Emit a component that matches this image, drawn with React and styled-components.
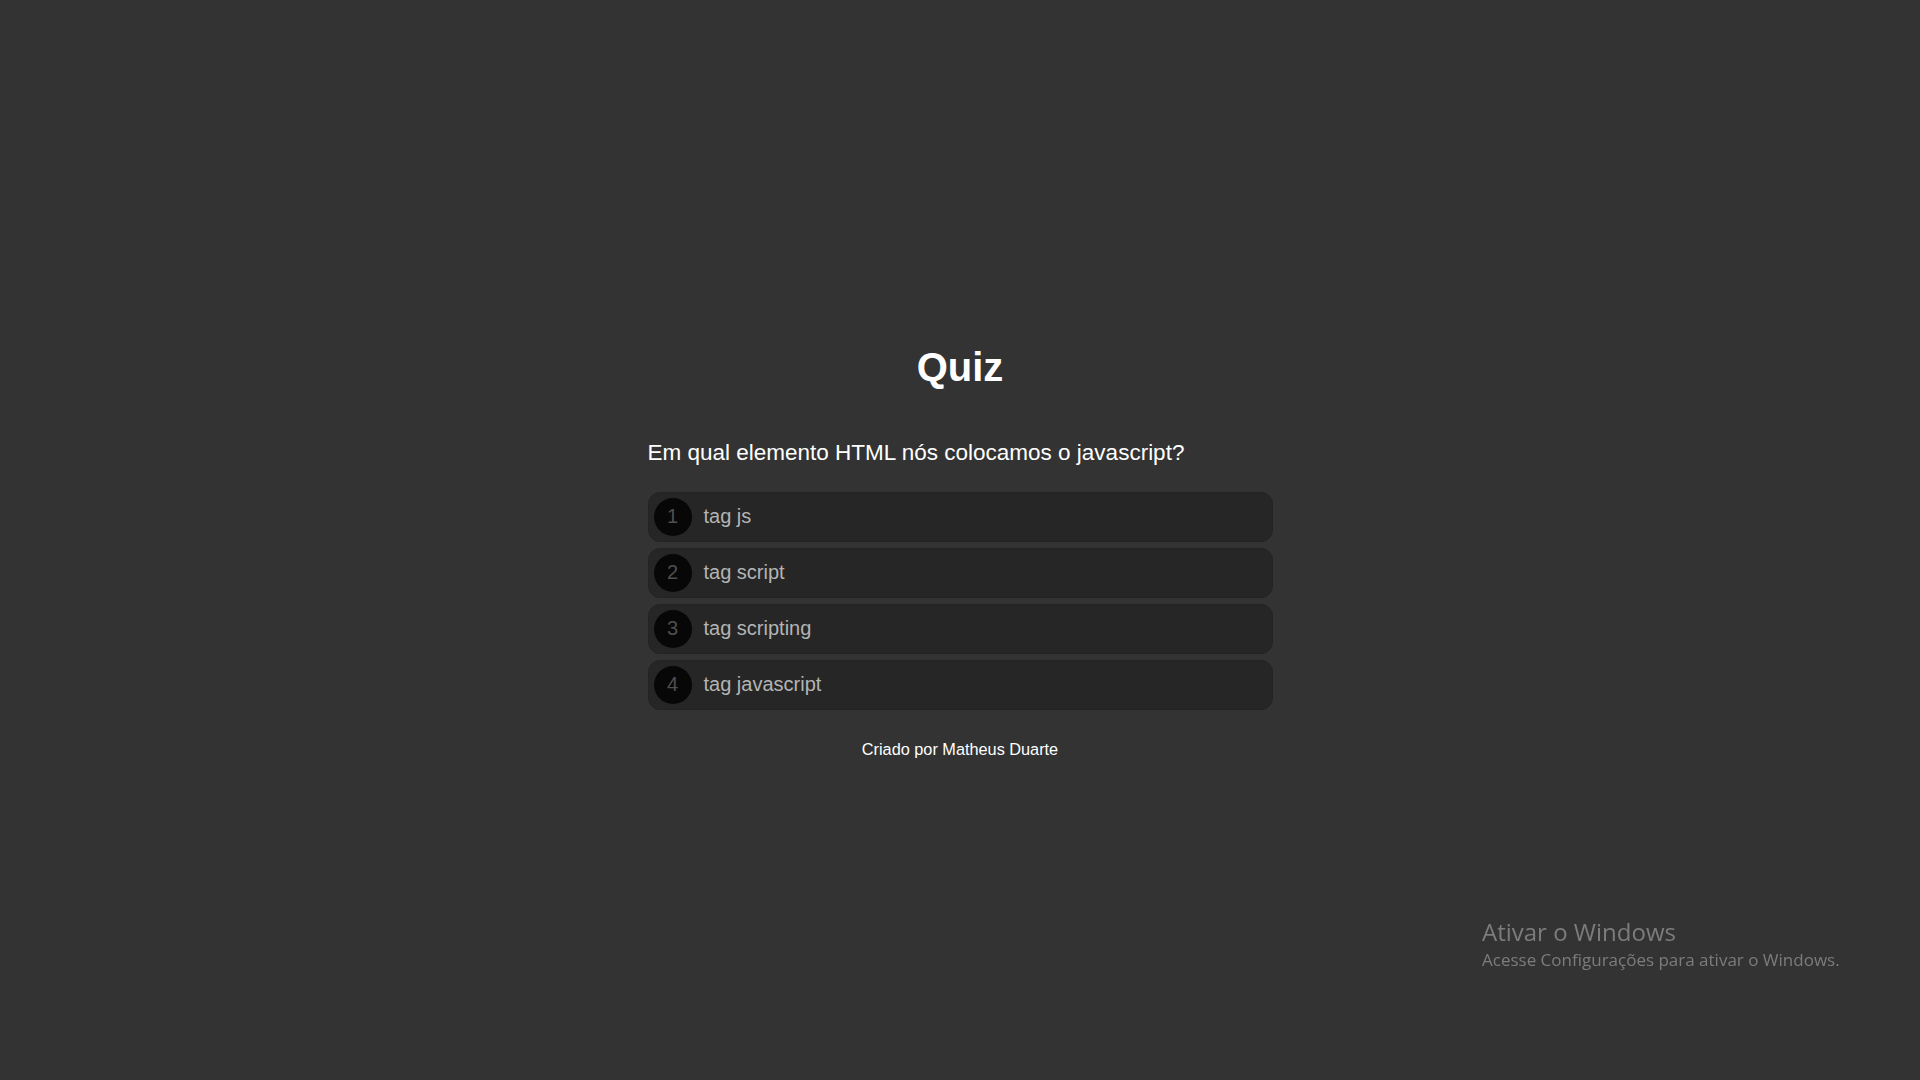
import styled, { createGlobalStyle } from 'styled-components'

const GlobalStyle = createGlobalStyle`
  html, body {
    margin: 0;
    padding: 0;
    background: #333333;
    font-family: "Liberation Sans", Arial, sans-serif;
  }
`

const options = ['tag js', 'tag script', 'tag scripting', 'tag javascript']

export default function App() {
  return (
    <>
      <GlobalStyle />
      <Page>
        <Quiz>
          <Title>Quiz</Title>
          <Question>Em qual elemento HTML nós colocamos o javascript?</Question>
          <OptionList>
            {options.map((text, i) => (
              <Option key={text}>
                <Number>{i + 1}</Number>
                <OptionText>{text}</OptionText>
              </Option>
            ))}
          </OptionList>
          <Footer>Criado por Matheus Duarte</Footer>
        </Quiz>
      </Page>
      <Watermark>
        <WatermarkTitle>Ativar o Windows</WatermarkTitle>
        <WatermarkText>Acesse Configurações para ativar o Windows.</WatermarkText>
      </Watermark>
    </>
  )
}

const Page = styled.div`
  min-height: 100vh;
  display: flex;
  align-items: center;
  justify-content: center;
`

const Quiz = styled.div`
  width: 625px;
  display: flex;
  flex-direction: column;
  margin-top: 23px;
`

const Title = styled.h1`
  margin: 0 0 50px;
  text-align: center;
  color: #ffffff;
  font-size: 40px;
  font-weight: 700;
`

const Question = styled.h2`
  margin: 0 0 26px;
  color: #ffffff;
  font-size: 22.5px;
  font-weight: 400;
`

const OptionList = styled.div`
  display: flex;
  flex-direction: column;
  gap: 6px;
`

const Option = styled.div`
  display: flex;
  align-items: center;
  padding: 5px;
  background: #262626;
  border: 1px solid #232323;
  border-radius: 12px;
  cursor: pointer;
`

const Number = styled.span`
  width: 38px;
  height: 38px;
  border-radius: 50%;
  background: #070707;
  color: #4f4f4f;
  font-size: 20px;
  display: flex;
  align-items: center;
  justify-content: center;
  margin-right: 12px;
  flex-shrink: 0;
`

const OptionText = styled.span`
  color: #b4b4b4;
  font-size: 20px;
`

const Footer = styled.p`
  margin: 30px 0 0;
  text-align: center;
  color: #ffffff;
  font-size: 16.3px;
`

const Watermark = styled.div`
  position: fixed;
  left: 1482px;
  top: 915px;
  font-family: "Open Sans", "Noto Sans", sans-serif;
  color: #7c7c7c;
`

const WatermarkTitle = styled.div`
  font-size: 24px;
  line-height: 33px;
`

const WatermarkText = styled.div`
  font-size: 17px;
  line-height: 24px;
`
